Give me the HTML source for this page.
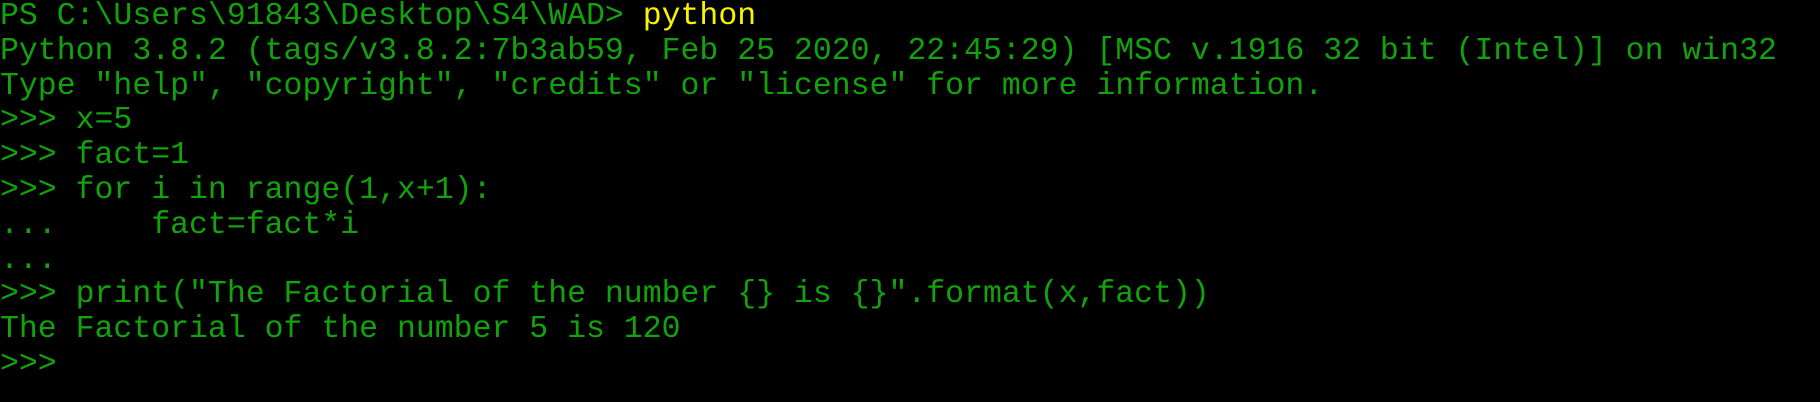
<!DOCTYPE html>
<html><head><meta charset="utf-8"><style>
html,body{margin:0;padding:0;background:#000;width:1820px;height:402px;overflow:hidden}
pre{margin:0;padding:0;font-family:"Liberation Mono",monospace;font-size:31.5px;line-height:34.8px;color:#13A10E;white-space:pre;letter-spacing:0}
.y{color:#F5F500}
</style></head><body><pre>PS C:\Users\91843\Desktop\S4\WAD&gt; <span class="y">python</span>
Python 3.8.2 (tags/v3.8.2:7b3ab59, Feb 25 2020, 22:45:29) [MSC v.1916 32 bit (Intel)] on win32
Type "help", "copyright", "credits" or "license" for more information.
&gt;&gt;&gt; x=5
&gt;&gt;&gt; fact=1
&gt;&gt;&gt; for i in range(1,x+1):
...     fact=fact*i
...
&gt;&gt;&gt; print("The Factorial of the number {} is {}".format(x,fact))
The Factorial of the number 5 is 120
&gt;&gt;&gt;</pre></body></html>
